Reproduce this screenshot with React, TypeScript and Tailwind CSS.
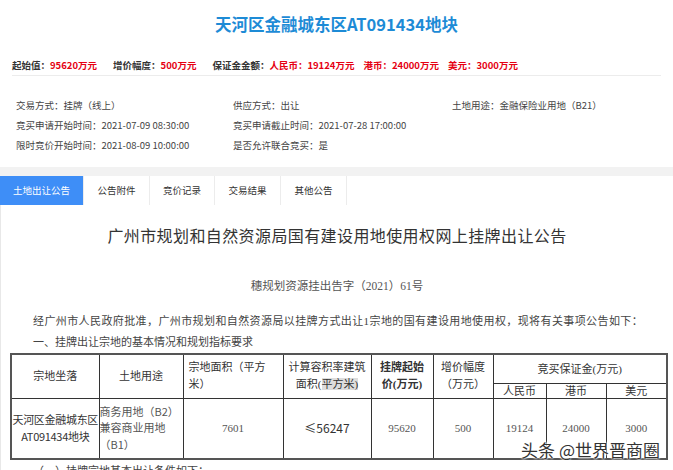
import React from "react";

const sans = { fontFamily: '"Noto Sans CJK SC", "Noto Sans", sans-serif' };
const serif = { fontFamily: '"Liberation Serif", "Noto Sans CJK SC", serif' };

const prices = [
  { label: "起始值：", value: "95620万元" },
  { label: "增价幅度：", value: "500万元" },
  { label: "保证金金额：", value: "人民币：19124万元" },
  { label: "", value: "港币：24000万元" },
  { label: "", value: "美元：3000万元" },
];

const info = [
  ["交易方式：挂牌（线上）", "供应方式：出让", "土地用途：金融保险业用地（B21）"],
  ["竞买申请开始时间：2021-07-09 08:30:00", "竞买申请截止时间：2021-07-28 17:00:00", ""],
  ["限时竞价开始时间：2021-08-09 10:00:00", "是否允许联合竞买：是", ""],
];

const tabs = ["土地出让公告", "公告附件", "竞价记录", "交易结果", "其他公告"];
const tabWidths = ["w-[84px]", "w-[66px]", "w-[65px]", "w-[66px]", "w-[66px]"];

const App = () => {
  return (
    <div className="relative w-[673px] h-[470px] overflow-hidden bg-white text-[#333]" style={sans}>
      {/* 标题 */}
      <div className="pt-[13px] text-center text-[16.5px] leading-[22px] font-bold text-[#1d8bd6]">
        天河区金融城东区AT091434地块
      </div>

      {/* 价格 */}
      <div className="mt-[23px] mx-[12px] pb-[3px] border-b border-[#ececec] flex gap-[9px] text-[9.5px] leading-[14px] font-bold">
        {prices.map((p, i) => (
          <span key={i} className={i === 1 || i === 2 ? "ml-[7px]" : ""}>
            {p.label}
            <span className="text-[#e50012]">{p.value}</span>
          </span>
        ))}
      </div>

      {/* 基本信息 */}
      <div className="mt-[19px] pl-[16px] text-[9.5px] text-[#444]">
        {info.map((row, i) => (
          <div key={i} className="flex h-[20px] items-center">
            <div className="w-[217px]">{row[0]}</div>
            <div className="w-[219px]">{row[1]}</div>
            <div>{row[2]}</div>
          </div>
        ))}
      </div>

      {/* 标签页 */}
      <div className="mt-[12px] h-[9px] bg-[#f2f2f2]" />
      <div className="flex h-[29px] text-[9.5px]">
        {tabs.map((t, i) => (
          <div
            key={t}
            className={
              "flex items-center justify-center border-r border-[#ececec] " +
              tabWidths[i] +
              (i === 0 ? " bg-[#3e8ef7] text-white" : " bg-white text-[#333]")
            }
          >
            {t}
          </div>
        ))}
      </div>

      {/* 公告内容 */}
      <div className="border-l border-[#e8e8e8] h-[300px]" style={serif}>
        <div className="pt-[20px] text-center text-[16px] leading-[24px] tracking-[0.4px] text-[#333]">
          广州市规划和自然资源局国有建设用地使用权网上挂牌出让公告
        </div>
        <div className="mt-[29px] text-center text-[11.5px] leading-[16px] text-[#555]">
          穗规划资源挂出告字（2021）61号
        </div>
        <div className="mt-[19px] pl-[32px] text-[11px] leading-[16px] tracking-[0.4px] text-[#444]">
          经广州市人民政府批准，广州市规划和自然资源局以挂牌方式出让1宗地的国有建设用地使用权，现将有关事项公告如下：
        </div>
        <div className="mt-[5px] pl-[32px] text-[11px] leading-[16px] text-[#444]">
          一、挂牌出让宗地的基本情况和规划指标要求
        </div>

        <table className="mt-[3px] ml-[9px] w-[656px] table-fixed border-collapse border-2 border-[#555] text-[11px] leading-[16px] text-[#333]">
          <colgroup>
            <col className="w-[88px]" />
            <col className="w-[84px]" />
            <col className="w-[100px]" />
            <col className="w-[88px]" />
            <col className="w-[62px]" />
            <col className="w-[60px]" />
            <col className="w-[53px]" />
            <col className="w-[60px]" />
            <col className="w-[61px]" />
          </colgroup>
          <tbody>
            <tr className="h-[29px]">
              <td rowSpan={2} className="border border-[#333] text-center">宗地坐落</td>
              <td rowSpan={2} className="border border-[#333] text-center">土地用途</td>
              <td rowSpan={2} className="border border-[#333] px-[5px] leading-[17px]">宗地面积（平方米）</td>
              <td rowSpan={2} className="border border-[#333] text-center leading-[17px] px-[3px]">
                计算容积率建筑
                <br />
                面积(<span className="bg-[#ddd]">平方米)</span>
              </td>
              <td rowSpan={2} className="border border-[#333] text-center leading-[17px] px-[6px] font-semibold">
                挂牌起始
                <br />
                价(万元)
              </td>
              <td rowSpan={2} className="border border-[#333] text-center leading-[17px] px-[2px]">
                增价幅度
                <br />
                （万元）
              </td>
              <td colSpan={3} className="border border-[#333] text-center">竞买保证金(万元)</td>
            </tr>
            <tr className="h-[15px]">
              <td className="border border-[#333] text-center leading-[14px]">人民币</td>
              <td className="border border-[#333] text-center leading-[14px]">港币</td>
              <td className="border border-[#333] text-center leading-[14px]">美元</td>
            </tr>
            <tr className="h-[61px] text-[#555]">
              <td className="border border-[#333] text-center text-[#333] whitespace-nowrap tracking-[-0.3px]">
                天河区金融城东区
                <br />
                <span style={sans}>AT091434</span>地块
              </td>
              <td className="border border-[#333] align-middle whitespace-nowrap">
                商务用地（<span style={sans}>B2</span>）
                <br />
                兼容商业用地
                <br />（<span style={sans}>B1</span>）
              </td>
              <td className="border border-[#333] text-center">7601</td>
              <td className="border border-[#333] text-center text-[12px] text-[#333]" style={sans}>≤56247</td>
              <td className="border border-[#333] text-center">95620</td>
              <td className="border border-[#333] text-center">500</td>
              <td className="border border-[#333] text-center">19124</td>
              <td className="border border-[#333] text-center">24000</td>
              <td className="border border-[#333] text-center">3000</td>
            </tr>
          </tbody>
        </table>
        <div className="mt-[3px] pl-[32px] text-[11px] leading-[16px] text-[#444]">
          （一）挂牌宗地基本出让条件如下：
        </div>
      </div>

      {/* 水印 */}
      <div
        className="absolute right-[13px] bottom-[10px] text-[17px] leading-[20px] text-[#333]"
        style={{ ...sans, textShadow: "0 0 2px #fff, 0 0 2px #fff, 0 0 3px #fff" }}
      >
        头条 @世界晋商圈
      </div>
    </div>
  );
};

export default App;
